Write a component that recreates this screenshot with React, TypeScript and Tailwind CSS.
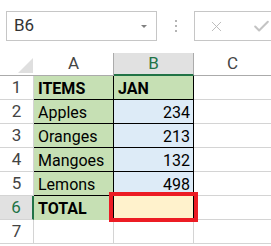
import { X, Check } from 'lucide-react';

const font = { fontFamily: 'Roboto, "Liberation Sans", Arial, sans-serif' };

type Row = { n: number; a: string; b: string };

const rows: Row[] = [
    { n: 1, a: 'ITEMS', b: 'JAN' },
    { n: 2, a: 'Apples', b: '234' },
    { n: 3, a: 'Oranges', b: '213' },
    { n: 4, a: 'Mangoes', b: '132' },
    { n: 5, a: 'Lemons', b: '498' },
    { n: 6, a: 'TOTAL', b: '' },
];

function FormulaBar() {
    return (
        <div className="h-[53px] flex items-start pt-[11px] pl-[6px]">
            {/* name box */}
            <div className="w-[153px] h-[30px] border border-[#c6c6c6] flex items-center justify-between pl-[7px] pr-[9px]">
                <span className="text-[17px] text-[#333]">B6</span>
                <span className="w-0 h-0 border-l-[3px] border-r-[3px] border-t-[3px] border-l-transparent border-r-transparent border-t-[#808080]" />
            </div>
            {/* grip dots */}
            <div className="w-[37px] h-[30px] flex flex-col items-center justify-center gap-[3px]">
                <span className="w-[2px] h-[2px] bg-[#b4b4b4]" />
                <span className="w-[2px] h-[2px] bg-[#b4b4b4]" />
                <span className="w-[2px] h-[2px] bg-[#b4b4b4]" />
            </div>
            {/* formula box */}
            <div className="flex-1 h-[30px] border border-r-0 border-[#c6c6c6] flex items-center gap-[27px] pl-[13px]">
                <X size={17} strokeWidth={1.3} className="text-[#b8b8b8]" />
                <Check size={19} strokeWidth={2.6} className="text-[#c4c4c4]" />
            </div>
        </div>
    );
}

function ColumnHeaders() {
    return (
        <div className="flex h-[23px]">
            <div className="w-[34px] h-full border-b border-[#ababab] relative">
                <svg className="absolute right-[1px] bottom-[2px]" width="15" height="15" viewBox="0 0 15 15">
                    <polygon points="15,0 15,15 0,15" fill="#dfdfdf" />
                </svg>
            </div>
            <div className="w-[80px] h-full border-b border-r border-[#ababab] flex items-center justify-center text-[17px] text-[#444]">A</div>
            <div className="w-[80px] h-full bg-[#e1e1e1] border-b-2 border-[#217346] border-r border-r-[#ababab] flex items-center justify-center text-[17px] text-[#217346]">B</div>
            <div className="flex-1 h-full border-b border-[#ababab] flex items-center justify-center text-[17px] text-[#444]">C</div>
        </div>
    );
}

function DataRow({ row }: { row: Row }) {
    const selected = row.n === 6;
    const header = row.n === 1 || row.n === 6;
    return (
        <div className="flex h-[24px]">
            <div
                className={`w-[34px] h-full border-b border-[#d4d4d4] flex items-center justify-center text-[17px] ${
                    selected ? 'bg-[#e1e1e1] text-[#217346] border-r-2 border-r-[#217346]' : 'text-[#444] border-r border-r-[#d4d4d4]'
                }`}
            >
                {row.n}
            </div>
            <div
                className={`w-[80px] h-full bg-[#c6e0b4] border-r border-black flex items-end pl-[4px] leading-[20px] text-[16px] text-black ${
                    row.n === 6 ? 'border-b border-b-[#c6e0b4]' : 'border-b'
                } ${header ? 'font-bold' : ''}`}
            >
                {row.a}
            </div>
            <div
                className={`relative w-[80px] h-full border-r border-b border-black flex items-end leading-[20px] text-[16px] text-black ${
                    row.n === 1 ? 'bg-[#c6e0b4] font-bold pl-[4px]' : row.n === 6 ? 'bg-[#fff2cc]' : 'bg-[#ddebf7] justify-end pr-[3px]'
                }`}
            >
                {row.b}
                {selected && (
                    <div className="absolute -left-[5px] -top-[4px] w-[89px] h-[30px] border-[4px] border-[#ec1c24]" />
                )}
            </div>
            <div className="flex-1 h-full border-b border-[#d4d4d4]" />
        </div>
    );
}

export default function App() {
    return (
        <div className="w-[271px] h-[246px] bg-white overflow-hidden" style={font}>
            <FormulaBar />
            <ColumnHeaders />
            {rows.map((r) => (
                <DataRow key={r.n} row={r} />
            ))}
            <div className="flex h-[24px]">
                <div className="w-[34px] h-full border-r border-b border-[#d4d4d4] flex items-center justify-center text-[17px] text-[#444]">7</div>
                <div className="w-[80px] h-full border-r border-b border-[#d4d4d4]" />
                <div className="w-[80px] h-full border-r border-b border-[#d4d4d4]" />
                <div className="flex-1 h-full border-b border-[#d4d4d4]" />
            </div>
        </div>
    );
}
